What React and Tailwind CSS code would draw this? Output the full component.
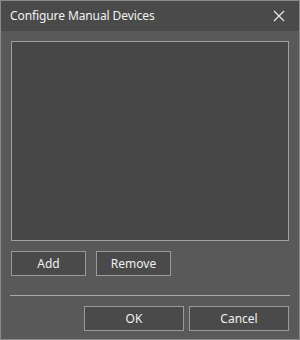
import React from "react";

function DialogButton({ label, className }) {
  return (
    <button
      className={
        "h-[25px] border border-[#9a9a9a] bg-[#4a4a4a] text-[12px] text-[#f0f0f0] " +
        className
      }
    >
      {label}
    </button>
  );
}

export default function App() {
  return (
    <div
      className="w-[300px] h-[340px] border border-[#8a8a8a] bg-[#595959] flex flex-col"
      style={{ fontFamily: '"Noto Sans", "Open Sans", sans-serif' }}
    >
      {/* title bar */}
      <div className="h-[30px] bg-[#4a4a4a] flex items-center justify-between pl-[9px] pr-[14px] shrink-0">
        <span className="text-[12px] text-[#f2f2f2] tracking-[-0.1px]">Configure Manual Devices</span>
        <svg width="12" height="12" viewBox="0 0 12 12" className="text-[#e8e8e8]">
          <path d="M1 1 L11 11 M11 1 L1 11" stroke="currentColor" strokeWidth="1.2" />
        </svg>
      </div>

      <div className="flex flex-col px-[10px] pt-[10px]">
        {/* device list */}
        <div className="h-[200px] w-[278px] border border-[#a0a0a0] bg-[#474747]" />

        <div className="flex gap-[10px] mt-[10px]">
          <DialogButton label="Add" className="w-[75px]" />
          <DialogButton label="Remove" className="w-[75px]" />
        </div>

        <div className="h-px bg-[#a8a8a8] mt-[19px] -mx-px" />

        <div className="flex justify-end gap-[5px] mt-[10px]">
          <DialogButton label="OK" className="w-[100px]" />
          <DialogButton label="Cancel" className="w-[100px]" />
        </div>
      </div>
    </div>
  );
}
